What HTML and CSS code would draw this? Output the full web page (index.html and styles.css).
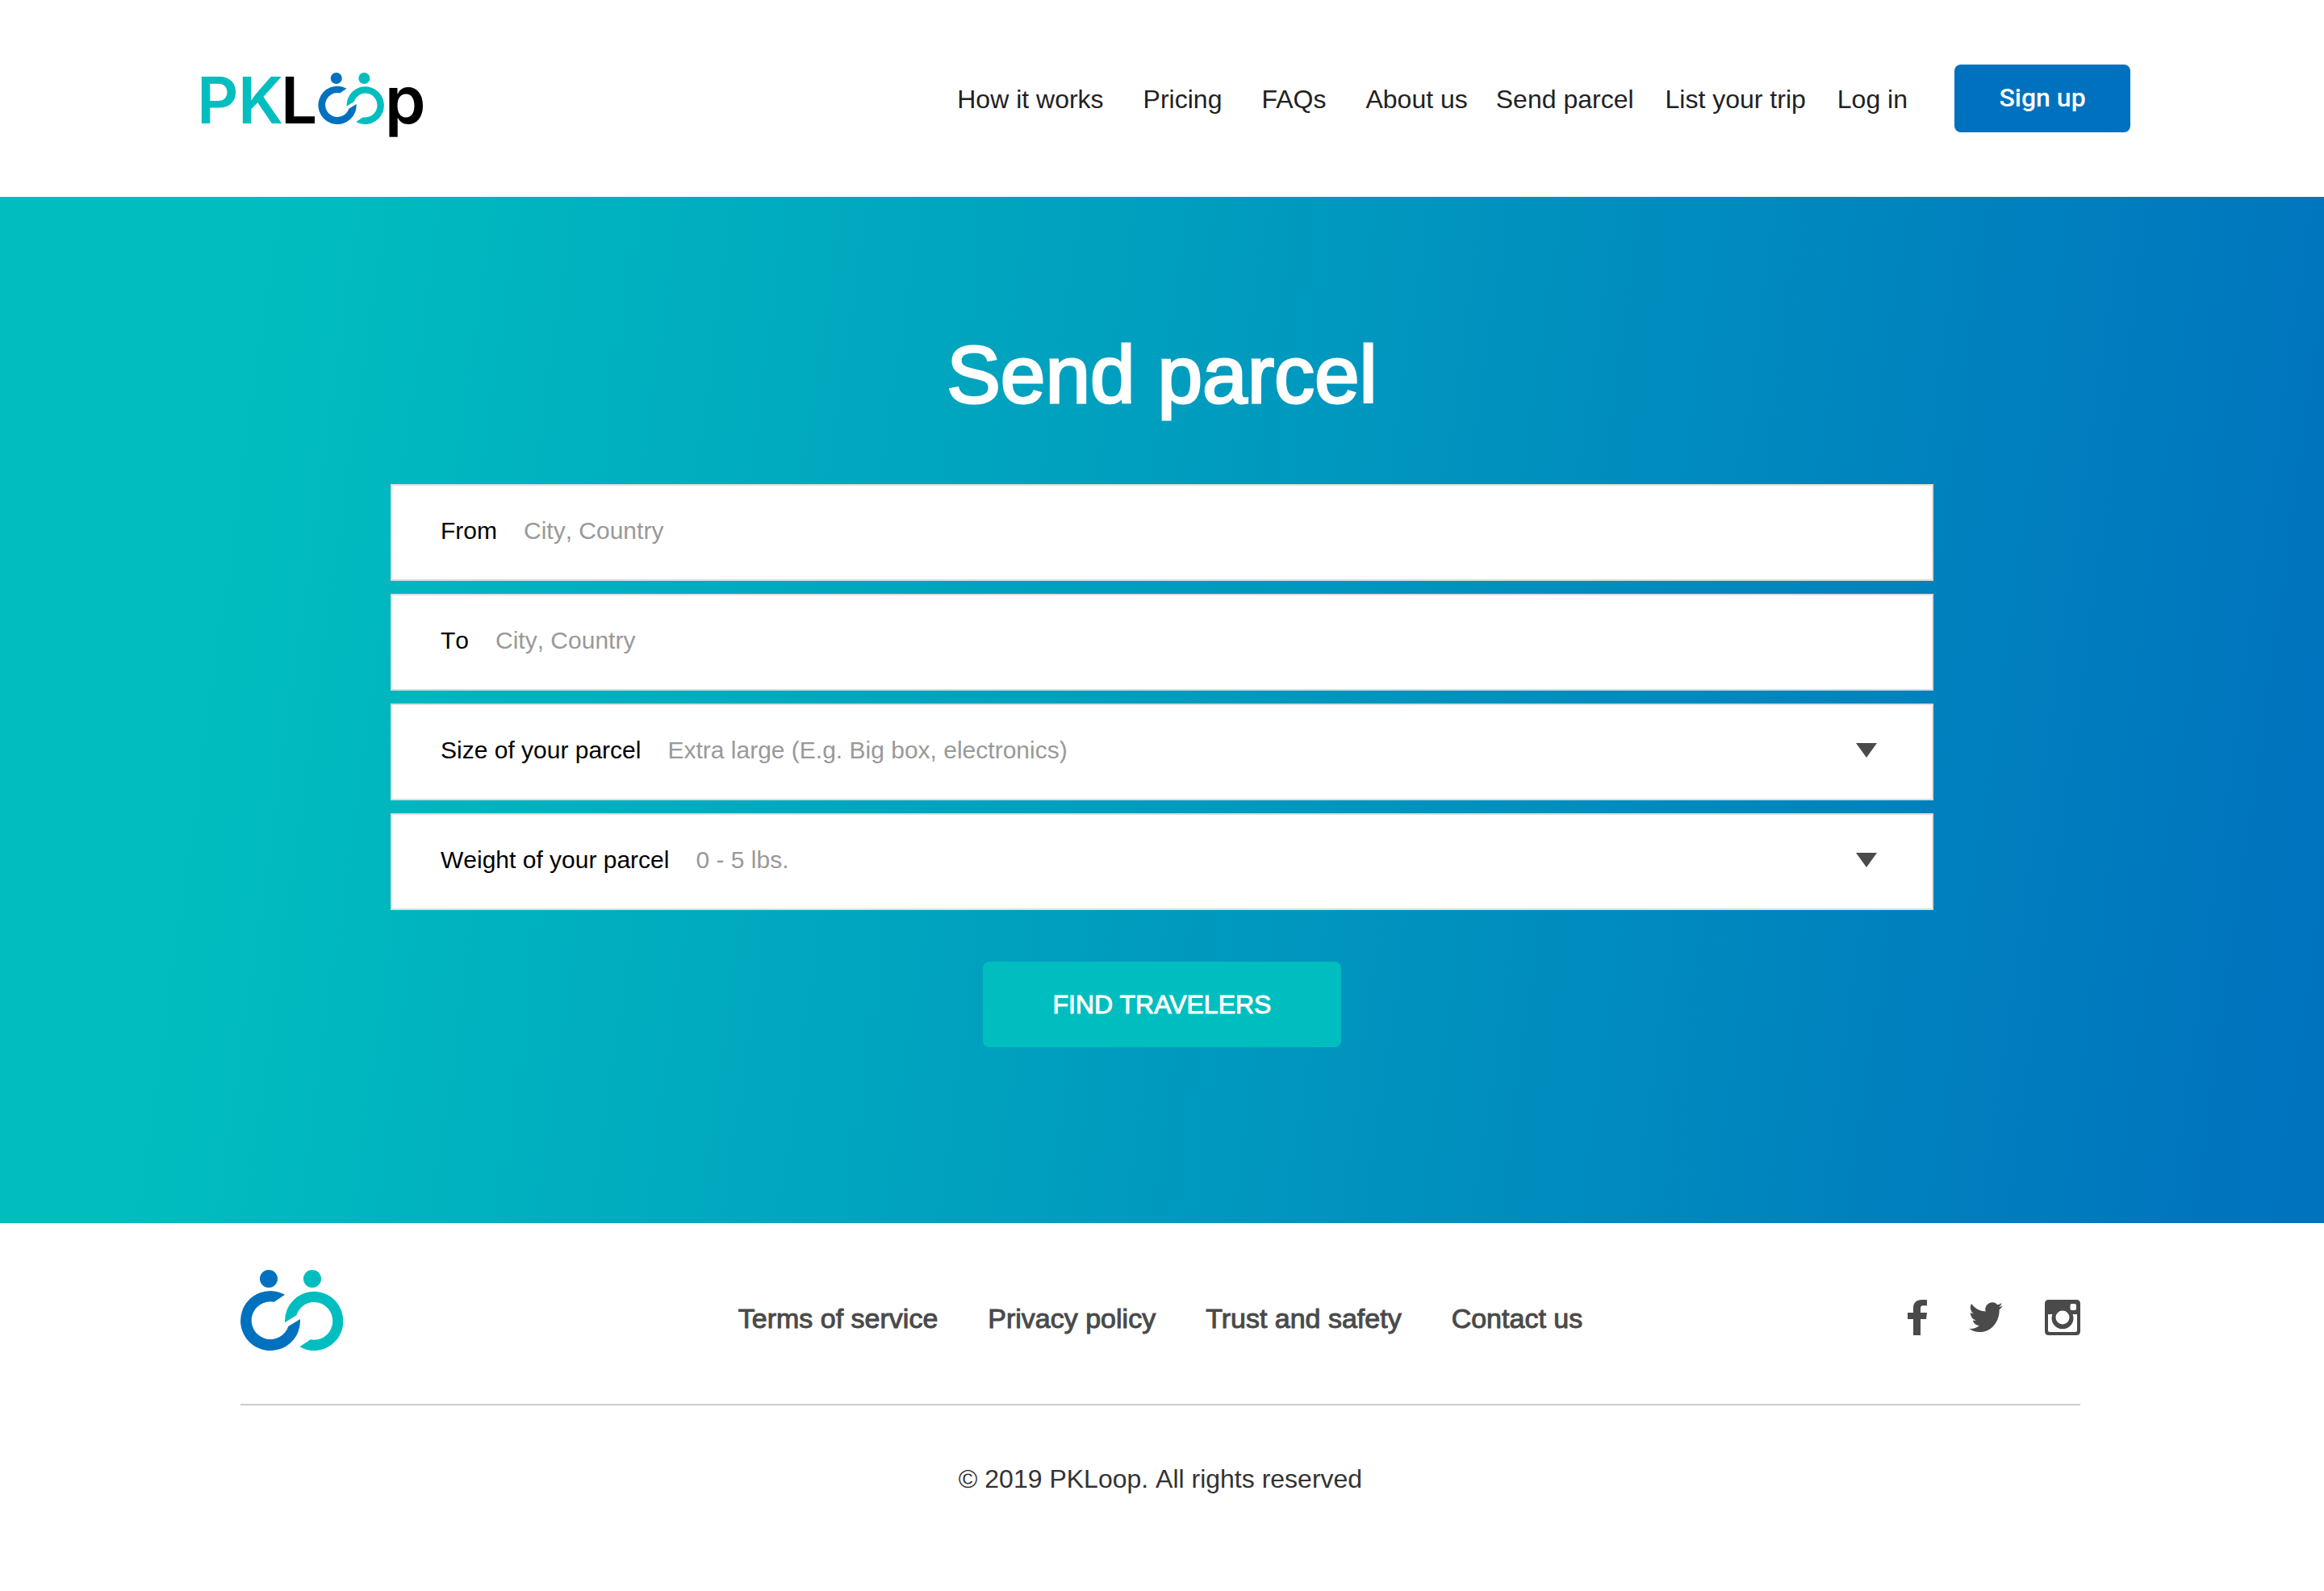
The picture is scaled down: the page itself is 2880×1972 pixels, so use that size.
FILE: index.html
```html
<!DOCTYPE html>
<html lang="en">
<head>
<meta charset="utf-8">
<meta name="viewport" content="width=device-width, initial-scale=1">
<title>Send parcel - PKLoop</title>
<link rel="stylesheet" href="styles.css">
</head>
<body>
<svg class="sprite" aria-hidden="true">
  <symbol id="loop" viewBox="0 0 127 100">
    <circle cx="35" cy="11" r="11" fill="#0071bf"/>
    <path fill="#0071bf" d="M55 30.7A37 37 0 1 0 74 61L59.3 70A23.4 23.4 0 1 1 41.7 39.7Z"/>
    <circle cx="89" cy="11" r="11" fill="#00bebf"/>
    <path fill="#00bebf" d="M55 65.3A36.2 36.6 0 1 1 73.3 95.3L87 86.3A23 23.4 0 1 0 69.3 56.3Z"/>
  </symbol>
</svg>

<header class="header">
  <a class="logo" href="#" aria-label="PKLoop home">
    <svg class="logo-art" viewBox="10 0 300 104">
      <text class="logo-teal" x="14 65" y="83">PK</text>
      <text class="logo-black" x="118" y="83">L</text>
      <use href="#loop" x="164" y="20" width="82" height="64"/>
      <text class="logo-black logo-p" x="247" y="83">p</text>
    </svg>
  </a>
  <nav class="nav" aria-label="Main">
    <div class="nav-group nav-info">
      <a href="#">How it works</a>
      <a href="#">Pricing</a>
      <a href="#">FAQs</a>
      <a href="#">About us</a>
    </div>
    <div class="nav-group nav-account">
      <a href="#">Send parcel</a>
      <a href="#">List your trip</a>
      <a href="#">Log in</a>
    </div>
    <button class="signup" type="button">Sign up</button>
  </nav>
</header>

<main class="hero">
  <h1 class="title">Send parcel</h1>
  <form class="form">
    <div class="field">
      <label for="from">From</label>
      <input id="from" type="text" placeholder="City, Country">
    </div>
    <div class="field">
      <label for="to">To</label>
      <input id="to" type="text" placeholder="City, Country">
    </div>
    <div class="field">
      <label for="size">Size of your parcel</label>
      <select id="size">
        <option>Extra large (E.g. Big box, electronics)</option>
      </select>
    </div>
    <div class="field">
      <label for="weight">Weight of your parcel</label>
      <select id="weight">
        <option>0 - 5 lbs.</option>
      </select>
    </div>
    <button class="submit" type="button">FIND TRAVELERS</button>
  </form>
</main>

<footer class="footer">
  <div class="footer-row">
    <a class="footer-mark" href="#" aria-label="PKLoop home">
      <svg viewBox="0 0 127 100" width="127" height="100"><use href="#loop"/></svg>
    </a>
    <nav class="footer-links" aria-label="Footer">
      <a href="#">Terms of service</a>
      <a href="#">Privacy policy</a>
      <a href="#">Trust and safety</a>
      <a href="#">Contact us</a>
    </nav>
    <div class="social">
      <a href="#" aria-label="Facebook">
        <svg width="24" height="44" viewBox="0 0 24 44"><path d="M24 .3V7.300H19.700C16.600 7.300 16 8.800 16 11V16H24L23 24H16V44H7V24H0V16H7V10.200C7 3.700 11.200 0 17.500 0C20.400 0 23 .2 24 .3Z"/></svg>
      </a>
      <a href="#" aria-label="Twitter">
        <svg width="42" height="38" viewBox="0 0 24 20" preserveAspectRatio="none"><path d="M24 2.400a9.800 9.800 0 0 1-2.800.8A4.900 4.900 0 0 0 23.300.5a9.900 9.900 0 0 1-3.100 1.200A4.900 4.900 0 0 0 11.800 6.100 14 14 0 0 1 1.700 1a4.900 4.900 0 0 0 1.500 6.500A4.900 4.900 0 0 1 1 6.900v.1a4.900 4.900 0 0 0 3.900 4.800 4.900 4.900 0 0 1-2.200.1 4.900 4.900 0 0 0 4.600 3.400A9.900 9.900 0 0 1 0 17.300 13.900 13.900 0 0 0 7.500 19.500c9.100 0 14-7.500 14-14v-.6A10 10 0 0 0 24 2.400Z"/></svg>
      </a>
      <a href="#" aria-label="Instagram">
        <svg width="44" height="44" viewBox="0 0 44 44"><path fill-rule="evenodd" d="M5 0H39Q44 0 44 5V39Q44 44 39 44H5Q0 44 0 39V5Q0 0 5 0ZM33.500 5Q31.500 5 31.500 7V11Q31.500 13 33.500 13H37Q39 13 39 11V7Q39 5 37 5ZM4 18V38Q4 40 6 40H38Q40 40 40 38V18H34.600A13.500 13.500 0 1 1 9.400 18ZM22 13.500A8.500 8.500 0 1 0 22 30.500A8.500 8.500 0 1 0 22 13.500Z"/></svg>
      </a>
    </div>
  </div>
  <p class="copyright">© 2019 PKLoop. All rights reserved</p>
</footer>
</body>
</html>
```
FILE: styles.css
```css
* {
  box-sizing: border-box;
}

body {
  margin: 0;
  background: #fff;
  color: #222;
  font-family: "Liberation Sans", Arial, Helvetica, sans-serif;
  font-size: 32px;
  line-height: 40px;
}

a {
  color: inherit;
  text-decoration: none;
}

button,
input,
select {
  margin: 0;
  padding: 0;
  border: 0;
  font: inherit;
}

svg {
  display: block;
}

.sprite {
  display: none;
}

/* Header */

.header {
  display: flex;
  align-items: center;
  justify-content: space-between;
  padding: 70px 240px;
}

.logo-art {
  width: 300px;
  height: 104px;
  font-family: Inter, "Liberation Sans", sans-serif;
  font-size: 80px;
  font-weight: 600;
}

.logo-teal {
  fill: #00bebf;
}

.logo-black {
  fill: #000;
}

.logo-p {
  font-size: 81px;
}

.nav,
.nav-group {
  display: flex;
  align-items: center;
  white-space: nowrap;
}

.nav-group {
  padding-top: 2px;
}

.nav-info {
  gap: 49px;
  margin-right: 35px;
}

.nav-account {
  gap: 39px;
  margin-right: 58px;
}

.signup {
  width: 218px;
  padding: 21px 0 23px;
  border-radius: 8px;
  background: #0071bf;
  color: #fff;
  font-family: Roboto, "Liberation Sans", sans-serif;
  font-weight: 500;
}

/* Search form */

.hero {
  padding: 160px 40px 218px;
  background: linear-gradient(98deg, #00bebf 10%, #0073be 98%);
}

.title {
  margin: 0 0 76px;
  color: #fff;
  font-size: 100px;
  font-weight: 400;
  line-height: 120px;
  text-align: center;
  -webkit-text-stroke: 3px #fff;
}

.form {
  display: flex;
  flex-direction: column;
  gap: 16px;
  max-width: 1912px;
  margin: 0 auto;
}

.field {
  display: flex;
  align-items: center;
  gap: 33px;
  height: 120px;
  padding: 0 68px 4px 60px;
  border: 2px solid #ddd;
  background: #fff;
  color: #000;
  font-size: 30px;
  font-kerning: none;
}

.field input,
.field select {
  flex: 1;
  min-width: 0;
  height: 100%;
  outline: 0;
  background-color: transparent;
  color: #999;
  font-kerning: none;
}

.field input::placeholder {
  color: #999;
  opacity: 1;
}

.field select {
  appearance: none;
  background-image: url("data:image/svg+xml,%3Csvg xmlns='http://www.w3.org/2000/svg' width='26' height='18'%3E%3Cpath fill='%234a4a4a' d='M0 0H26L13 18Z'/%3E%3C/svg%3E");
  background-repeat: no-repeat;
  background-position: right center;
}

.submit {
  align-self: center;
  width: 444px;
  height: 106px;
  margin-top: 48px;
  border-radius: 8px;
  background: #00bebf;
  color: #fff;
  -webkit-text-stroke: 1px #fff;
}

/* Footer */

.footer {
  padding: 58px 302px 119px 298px;
}

.footer-row {
  display: grid;
  grid-template-columns: 1fr auto 1fr;
  align-items: center;
  padding-bottom: 46px;
  border-bottom: 2px solid #ccc;
  color: #4a4a4a;
}

.footer-mark {
  height: 120px;
}

.footer-links {
  display: flex;
  gap: 62px;
  font-size: 34px;
  white-space: nowrap;
  -webkit-text-stroke: 1px #4a4a4a;
}

.social {
  display: flex;
  align-items: center;
  justify-content: flex-end;
  gap: 52px;
  padding-bottom: 2px;
  fill: #4a4a4a;
}

.copyright {
  margin: 71px 0 0;
  color: #333;
  font-kerning: none;
  text-align: center;
}
```
